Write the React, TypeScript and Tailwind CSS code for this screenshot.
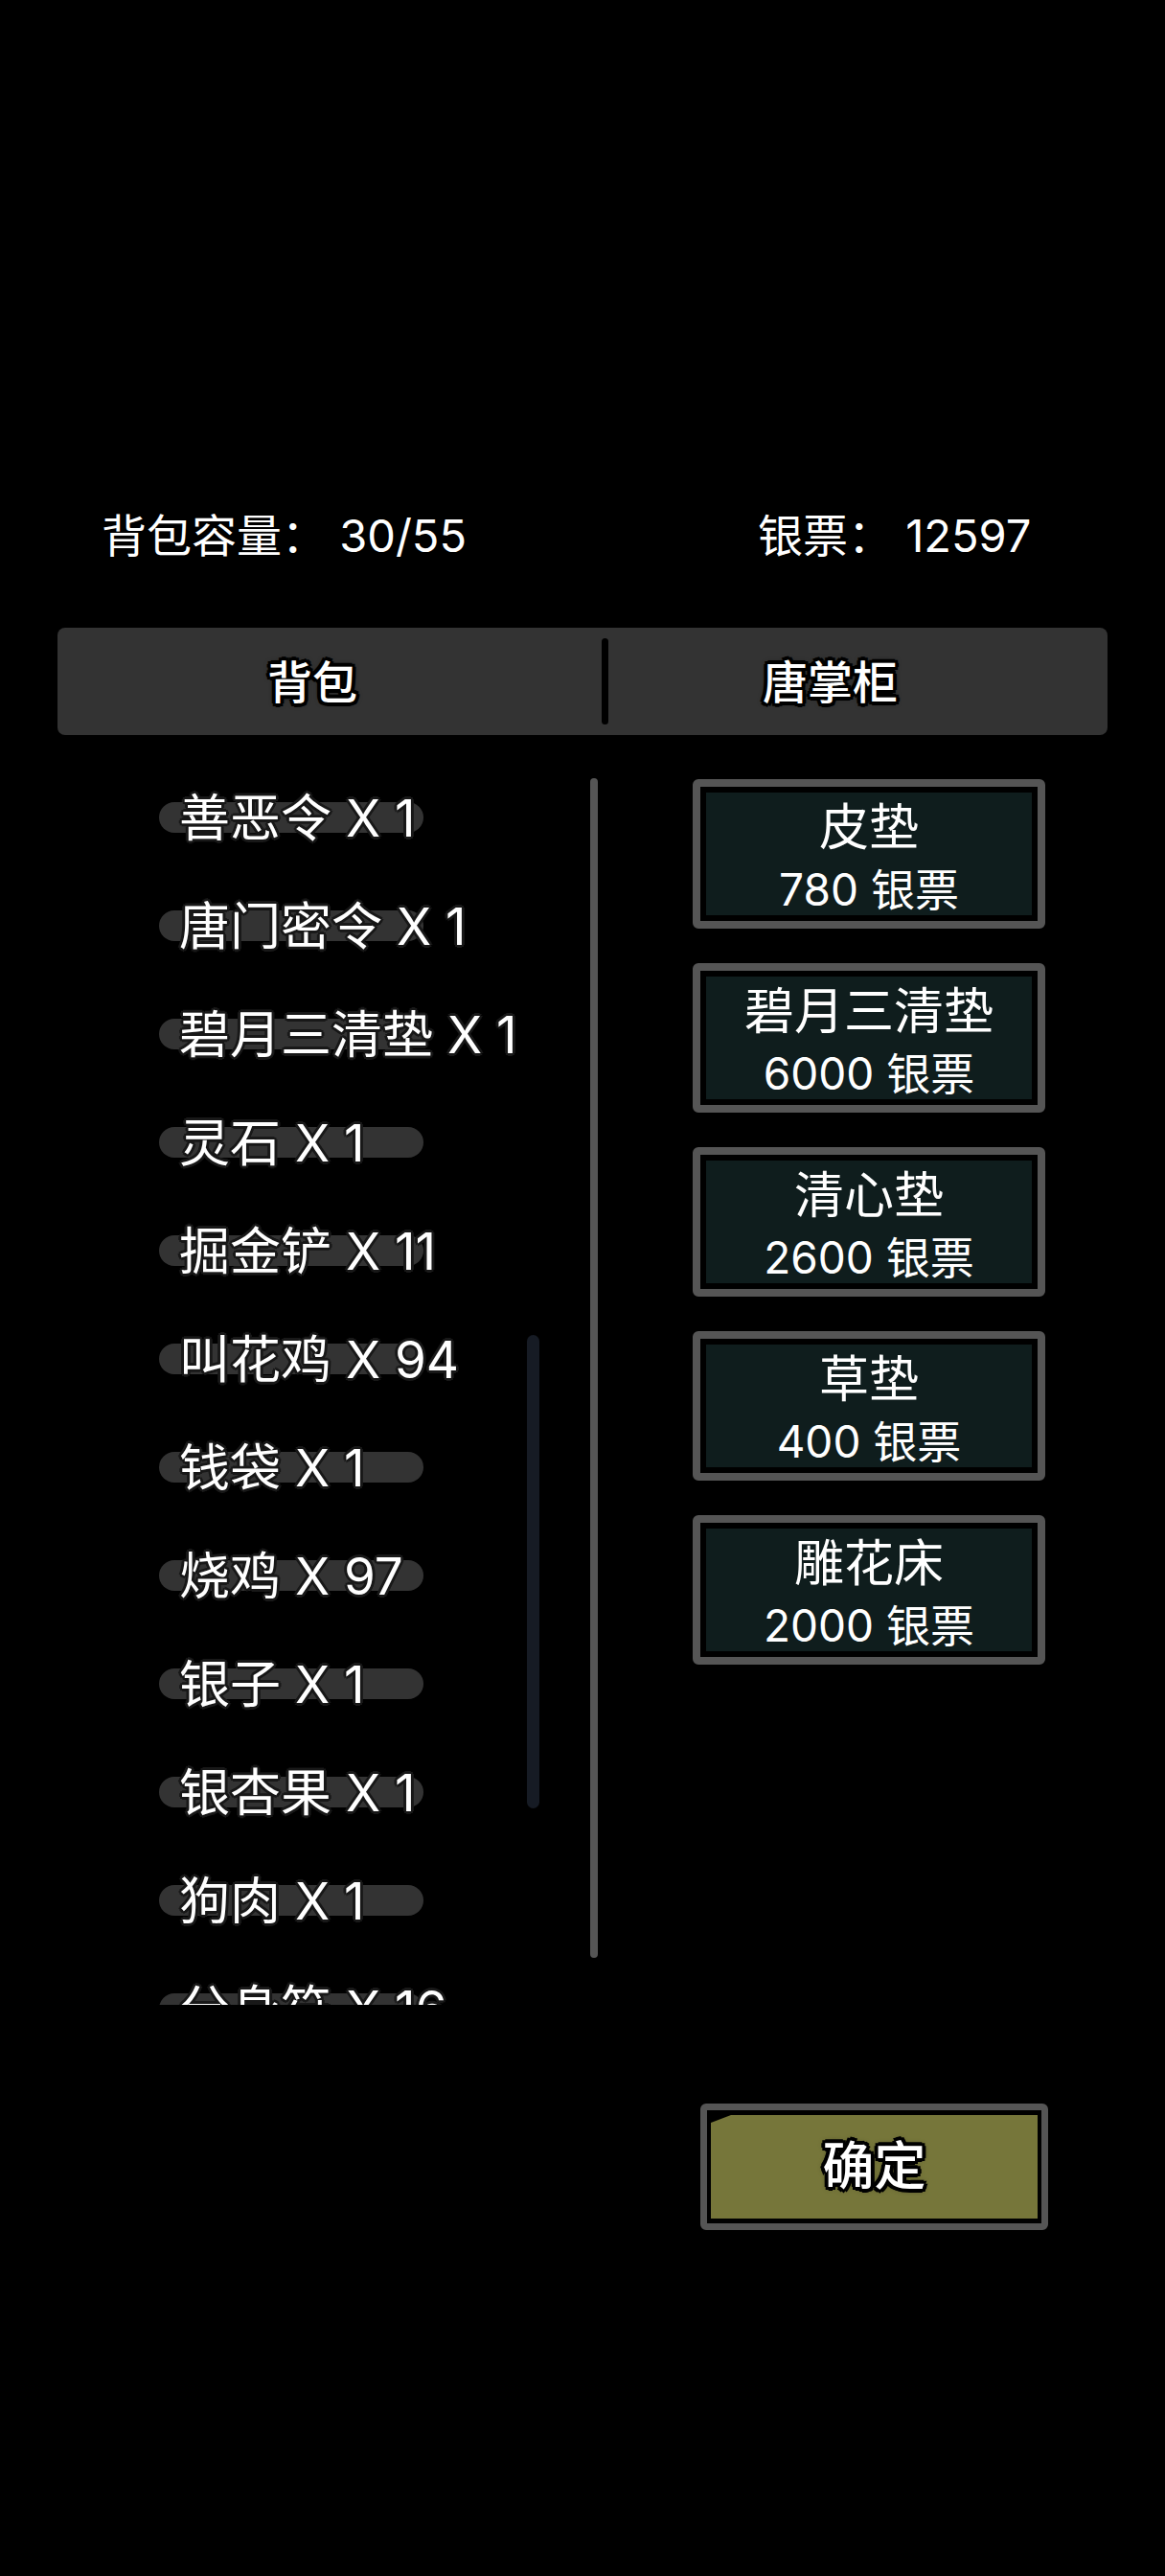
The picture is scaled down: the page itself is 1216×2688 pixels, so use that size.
import React from "react";

const items = [
  "善恶令 X 1",
  "唐门密令 X 1",
  "碧月三清垫 X 1",
  "灵石 X 1",
  "掘金铲 X 11",
  "叫花鸡 X 94",
  "钱袋 X 1",
  "烧鸡 X 97",
  "银子 X 1",
  "银杏果 X 1",
  "狗肉 X 1",
  "分身符 X 16",
];

const goods = [
  { name: "皮垫", price: 780 },
  { name: "碧月三清垫", price: 6000 },
  { name: "清心垫", price: 2600 },
  { name: "草垫", price: 400 },
  { name: "雕花床", price: 2000 },
];

const font = "font-['Inter','Noto_Sans_CJK_SC',sans-serif]";
const thinOutline =
  "[text-shadow:3px_0_0_#181818,-3px_0_0_#181818,0_3px_0_#181818,0_-3px_0_#181818,2px_2px_0_#181818,-2px_-2px_0_#181818,2px_-2px_0_#181818,-2px_2px_0_#181818]";
const thickOutline =
  "[text-shadow:4px_0_0_#000,-4px_0_0_#000,0_4px_0_#000,0_-4px_0_#000,3px_3px_0_#000,-3px_-3px_0_#000,3px_-3px_0_#000,-3px_3px_0_#000,0_0_6px_#000]";

export default function App() {
  return (
    <div className={`w-[1216px] h-[2688px] bg-black text-white overflow-hidden pt-[529px] ${font}`}>
      {/* header */}
      <div className="flex text-[47px] leading-[60px]">
        <span className="w-[791px] pl-[106px]">背包容量： 30/55</span>
        <span>银票： 12597</span>
      </div>

      {/* tabs */}
      <div className="mt-[66px] ml-[60px] w-[1096px] h-[112px] rounded-[8px] bg-[#333333] flex items-center">
        <div className={`w-[532px] text-center text-[47px] font-medium leading-none ${thickOutline}`}>背包</div>
        <div className="ml-[36px] w-[7px] h-[90px] rounded-full bg-black" />
        <div className={`flex-1 pr-[58px] text-center text-[47px] font-medium leading-none ${thickOutline}`}>唐掌柜</div>
      </div>

      <div className="mt-[31px] flex">
        {/* bag list */}
        <div className="relative w-[628px] h-[1294px] overflow-hidden">
          {items.map((it) => (
            <div key={it} className="relative h-[113px] flex items-center">
              <div className="absolute left-[166px] top-1/2 -translate-y-1/2 -mt-[2px] h-[32px] w-[276px] rounded-full bg-[#333333]" />
              <span className={`relative pl-[187px] text-[53px] leading-none whitespace-nowrap ${thinOutline}`}>{it}</span>
            </div>
          ))}
          <div className="absolute left-[550px] top-[595px] w-[13px] h-[494px] rounded-full bg-[#161b24]" />
          <div className="absolute left-[616px] top-[14px] w-[8px] h-[1231px] rounded-full bg-[#555555]" />
        </div>

        {/* shop */}
        <div className="pl-[95px] pt-[15px] flex flex-col gap-[36px]">
          {goods.map((g) => (
            <div key={g.name} className="w-[368px] h-[156px] border-[8px] border-[#555555] rounded-[6px] bg-black p-[6px]">
              <div className="h-full bg-[#0f1d1d] flex flex-col items-center justify-center">
                <div className="mt-[10px] text-[52px] leading-[64px]">{g.name}</div>
                <div className="text-[46px] leading-[64px]">{g.price} 银票</div>
              </div>
            </div>
          ))}
        </div>
      </div>

      {/* confirm */}
      <div className="mt-[103px] ml-[731px] w-[363px] h-[132px] border-[7px] border-[#555555] rounded-[6px] bg-black px-[4px] py-[5px]">
        <div className="h-full bg-[#76763a] [clip-path:polygon(0_8px,21px_0,100%_0,100%_100%,0_100%)] flex items-center justify-center">
          <span className={`text-[54px] font-medium leading-none ${thickOutline}`}>确定</span>
        </div>
      </div>
    </div>
  );
}
